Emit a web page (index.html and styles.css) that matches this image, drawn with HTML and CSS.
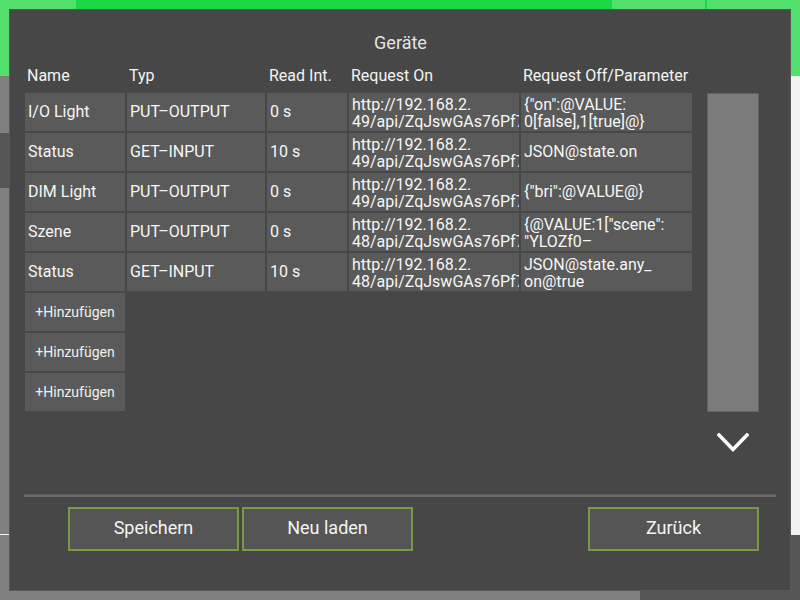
FILE: index.html
```html
<!DOCTYPE html>
<html lang="de">
<head>
<meta charset="utf-8">
<title>Geräte</title>
<link rel="stylesheet" href="styles.css">
</head>
<body>
<div class="page">
  <div class="topbar">
    <div class="seg light w76"></div>
    <div class="seg bright w536"></div>
    <div class="seg light w93"></div>
    <div class="seg bright w2"></div>
    <div class="seg light grow"></div>
  </div>
  <div class="below">
    <div class="left-panel">
      <div class="lp-gap1"></div>
      <div class="lp-dark"></div>
      <div class="lp-gap2"></div>
      <div class="lp-line"></div>
    </div>
    <div class="right-panel">
      <div class="rp-white"></div>
    </div>
  </div>
</div>

<div class="dialog">
  <div class="title">Geräte</div>
  <div class="main">
    <div class="table">
      <div class="grid head">
        <div class="hcell">Name</div>
        <div class="hcell">Typ</div>
        <div class="hcell">Read Int.</div>
        <div class="hcell">Request On</div>
        <div class="hcell">Request Off/Parameter</div>
      </div>
      <div class="grid rows">
        <div class="cell">I/O Light</div>
        <div class="cell">PUT–OUTPUT</div>
        <div class="cell">0 s</div>
        <div class="cell two">http://192.168.2.<br>49/api/ZqJswGAs76Pf7KqP3a</div>
        <div class="cell two">{"on":@VALUE:<br>0[false],1[true]@}</div>

        <div class="cell">Status</div>
        <div class="cell">GET–INPUT</div>
        <div class="cell">10 s</div>
        <div class="cell two">http://192.168.2.<br>49/api/ZqJswGAs76Pf7KqP3a</div>
        <div class="cell">JSON@state.on</div>

        <div class="cell">DIM Light</div>
        <div class="cell">PUT–OUTPUT</div>
        <div class="cell">0 s</div>
        <div class="cell two">http://192.168.2.<br>49/api/ZqJswGAs76Pf7KqP3a</div>
        <div class="cell">{"bri":@VALUE@}</div>

        <div class="cell">Szene</div>
        <div class="cell">PUT–OUTPUT</div>
        <div class="cell">0 s</div>
        <div class="cell two">http://192.168.2.<br>48/api/ZqJswGAs76Pf7KqP3a</div>
        <div class="cell two">{@VALUE:1["scene":<br>"YLOZf0–</div>

        <div class="cell">Status</div>
        <div class="cell">GET–INPUT</div>
        <div class="cell">10 s</div>
        <div class="cell two">http://192.168.2.<br>48/api/ZqJswGAs76Pf7KqP3a</div>
        <div class="cell two">JSON@state.any_<br>on@true</div>
      </div>
      <div class="adds">
        <div class="add">+Hinzufügen</div>
        <div class="add">+Hinzufügen</div>
        <div class="add">+Hinzufügen</div>
      </div>
    </div>
    <div class="side">
      <div class="track"></div>
      <svg class="chev" width="32" height="20" viewBox="0 0 32 20">
        <polyline points="2,2 16,16.5 30,2" fill="none" stroke="#ffffff" stroke-width="3.6" stroke-linecap="square" stroke-linejoin="miter"/>
      </svg>
    </div>
  </div>
  <div class="sep"></div>
  <div class="buttons">
    <div class="btn">Speichern</div>
    <div class="btn">Neu laden</div>
    <div class="btn push">Zurück</div>
  </div>
</div>
</body>
</html>
```

FILE: styles.css
```css
* { box-sizing: border-box; }
html, body {
  margin: 0;
  padding: 0;
  width: 800px;
  height: 600px;
  overflow: hidden;
  font-family: Roboto, "Liberation Sans", sans-serif;
}
.page {
  width: 800px;
  height: 600px;
  display: flex;
  flex-direction: column;
}
.topbar {
  height: 76px;
  display: flex;
}
.seg.light { background: #53df6b; }
.seg.bright { background: #1bd946; }
.w76 { width: 76px; }
.w536 { width: 536px; }
.w93 { width: 93px; }
.w2 { width: 2px; }
.grow { flex: 1; }
.below {
  flex: 1;
  display: flex;
}
.left-panel {
  width: 640px;
  background: #808080;
  display: flex;
  flex-direction: column;
}
.lp-gap1 { height: 57px; }
.lp-dark { height: 55px; background: #555555; }
.lp-gap2 { height: 346px; }
.lp-line { height: 1px; background: #f4f4f4; }
.right-panel {
  flex: 1;
  background: #555555;
}
.rp-white { height: 459px; background: #f2f2f2; }

.dialog {
  position: absolute;
  left: 9px;
  top: 9px;
  width: 782px;
  height: 582px;
  background: #474747;
  border: 1px solid #585858;
  padding: 21px 14px 0 15px;
  display: flex;
  flex-direction: column;
  color: #f2f2f2;
}
.title {
  height: 24px;
  line-height: 24px;
  font-size: 18px;
  text-align: center;
  color: #e4e4e4;
}
.main {
  margin-top: 9px;
  display: flex;
}
.table {
  width: 667px;
}
.grid {
  display: grid;
  grid-template-columns: 100px 138px 80px 170px 171px;
  column-gap: 2px;
}
.head {
  height: 22px;
  margin-bottom: 7px;
  padding-top: 1px;
}
.hcell {
  font-size: 16px;
  line-height: 22px;
  padding-left: 2px;
  white-space: nowrap;
  color: #f4f4f4;
}
.rows {
  row-gap: 2px;
}
.cell {
  height: 38px;
  background: #5a5a5a;
  font-size: 16px;
  line-height: 18px;
  padding-left: 3px;
  display: flex;
  align-items: center;
  white-space: nowrap;
  overflow: hidden;
  color: #f6f6f6;
}
.cell.two {
  line-height: 17.5px;
  padding-top: 2px;
}
.adds {
  margin-top: 2px;
  display: flex;
  flex-direction: column;
  gap: 2px;
}
.add {
  width: 100px;
  height: 38px;
  background: #5a5a5a;
  font-size: 14px;
  padding-bottom: 1px;
  display: flex;
  align-items: center;
  justify-content: center;
  color: #f0f0f0;
}
.side {
  margin-left: 15px;
  width: 52px;
  padding-top: 29px;
  display: flex;
  flex-direction: column;
  align-items: center;
}
.track {
  width: 52px;
  height: 319px;
  background: #7b7b7b;
  border: 1px solid #626262;
}
.chev {
  margin-top: 21px;
  display: block;
}
.sep {
  margin-top: 41px;
  margin-left: -1px;
  height: 3px;
  background: #6a6a6a;
  border-top: 1px solid #5c5c5c;
}
.buttons {
  margin-top: 10px;
  padding-left: 43px;
  padding-right: 17px;
  display: flex;
  gap: 3px;
}
.btn {
  width: 171px;
  height: 44px;
  background: #555555;
  border: 2px solid #789a48;
  font-size: 18px;
  padding-bottom: 3px;
  display: flex;
  align-items: center;
  justify-content: center;
  color: #f4f4f4;
}
.btn.push { margin-left: auto; }
```
